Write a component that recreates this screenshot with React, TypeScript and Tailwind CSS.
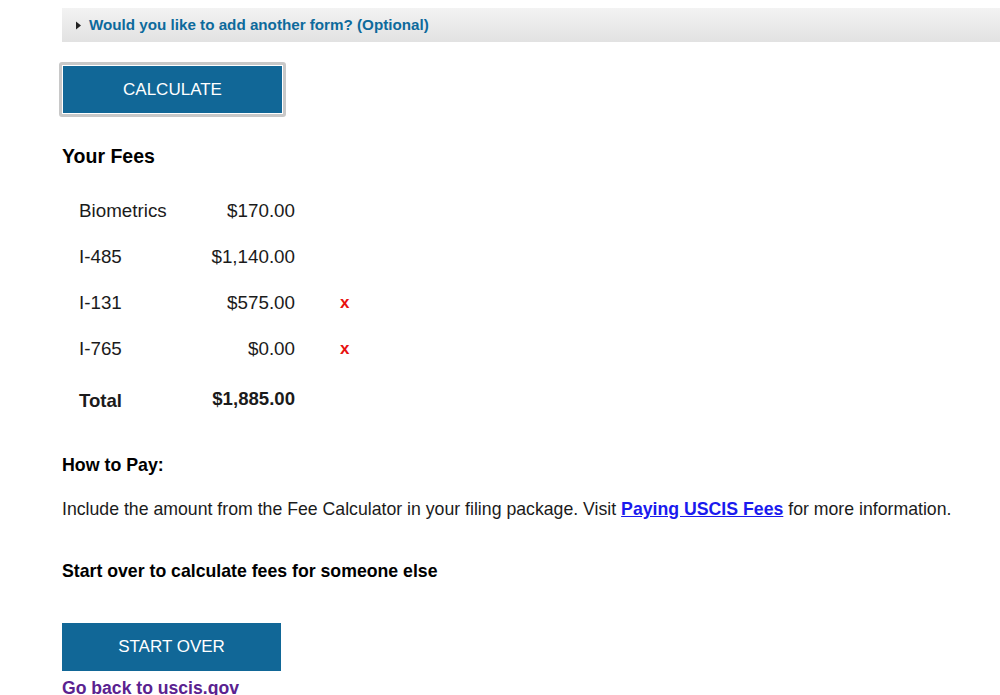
import React from "react";

const fees = [
  { name: "Biometrics", amount: "$170.00", removable: false },
  { name: "I-485", amount: "$1,140.00", removable: false },
  { name: "I-131", amount: "$575.00", removable: true },
  { name: "I-765", amount: "$0.00", removable: true },
];

export default function App() {
  return (
    <div className="min-h-[695px] bg-white font-['Liberation_Sans',Arial,sans-serif] text-[#1b1b1b]">
      <div className="pl-[62px] pt-2">
        {/* Optional form accordion */}
        <div className="flex h-[34px] items-center gap-[7px] bg-gradient-to-b from-[#f3f3f3] to-[#e2e2e2] pl-[13px]">
          <svg width="7" height="9" viewBox="0 0 7 9">
            <path d="M1 0.5 L6 4.5 L1 8.5 Z" fill="#222" />
          </svg>
          <span className="text-[15.2px] font-bold text-[#0d6a9c]">Would you like to add another form? (Optional)</span>
        </div>

        {/* Calculate */}
        <div className="mt-5 ml-[-3px] inline-block rounded-[3px] border-[3px] border-[#c8c8c8] p-px">
          <button className="flex h-[47px] w-[219px] items-center justify-center bg-[#116797] text-[17px] text-white">
            CALCULATE
          </button>
        </div>

        <h2 className="mt-[26px] text-[19.5px] font-bold leading-[26px] text-black">Your Fees</h2>

        <div className="mt-[19px] pl-[17px]">
          {fees.map((f) => (
            <div key={f.name} className="flex h-[46px] items-center text-[18.8px]">
              <span className="w-[120px]">{f.name}</span>
              <span className="w-[96px] text-right">{f.amount}</span>
              <span className="ml-[45px] text-[17px] font-bold text-[#e8110f]">{f.removable ? "x" : ""}</span>
            </div>
          ))}
          <div className="flex h-[54px] items-center text-[18.6px] font-bold">
            <span className="w-[120px] pt-[4px]">Total</span>
            <span className="w-[96px] text-right">$1,885.00</span>
          </div>
        </div>

        <h3 className="mt-[28px] text-[17.8px] font-bold leading-[22px] text-black">How to Pay:</h3>
        <p className="mt-[22px] text-[17.7px] leading-[22px]">
          Include the amount from the Fee Calculator in your filing package. Visit{" "}
          <a href="#" className="font-bold text-[#1a1aee] underline">Paying USCIS Fees</a> for more information.
        </p>

        <p className="mt-[40px] text-[17.7px] font-bold leading-[22px] text-black">Start over to calculate fees for someone else</p>

        <button className="mt-[41px] flex h-[48px] w-[219px] items-center justify-center bg-[#116797] text-[17px] text-white">
          START OVER
        </button>
        <a href="#" className="mt-[7px] block w-fit text-[17.6px] font-bold leading-[20px] text-[#5a2290] underline">Go back to uscis.gov</a>
      </div>
    </div>
  );
}
